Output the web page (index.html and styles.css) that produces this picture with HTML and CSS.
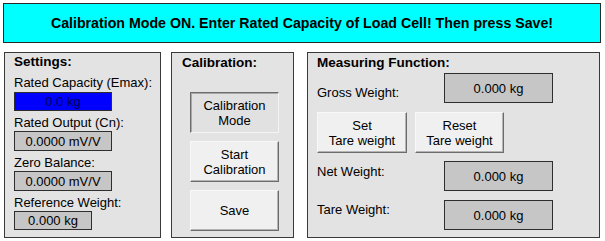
FILE: index.html
```html
<!DOCTYPE html>
<html>
<head>
<meta charset="utf-8">
<link rel="stylesheet" href="styles.css">
</head>
<body>
<div class="page">
  <div class="banner">Calibration Mode ON. Enter Rated Capacity of Load Cell! Then press Save!</div>
  <div class="panels">
    <div class="panel settings">
      <div class="title">Settings:</div>
      <div class="label first">Rated Capacity (Emax):</div>
      <div class="field editing wide">0.0 kg</div>
      <div class="label">Rated Output (Cn):</div>
      <div class="field wide">0.0000 mV/V</div>
      <div class="label">Zero Balance:</div>
      <div class="field wide">0.0000 mV/V</div>
      <div class="label">Reference Weight:</div>
      <div class="field narrow">0.000 kg</div>
    </div>
    <div class="panel calibration">
      <div class="title">Calibration:</div>
      <div class="btn-stack">
        <div class="btn pressed">Calibration<br>Mode</div>
        <div class="btn">Start<br>Calibration</div>
        <div class="btn">Save</div>
      </div>
    </div>
    <div class="panel measuring">
      <div class="title">Measuring Function:</div>
      <div class="row gross">
        <div class="rlabel">Gross Weight:</div>
        <div class="display">0.000 kg</div>
      </div>
      <div class="row buttons">
        <div class="btn tare">Set<br>Tare weight</div>
        <div class="btn tare reset">Reset<br>Tare weight</div>
      </div>
      <div class="row net">
        <div class="rlabel">Net Weight:</div>
        <div class="display">0.000 kg</div>
      </div>
      <div class="row tarew">
        <div class="rlabel">Tare Weight:</div>
        <div class="display">0.000 kg</div>
      </div>
    </div>
  </div>
</div>
</body>
</html>
```

FILE: styles.css
```css
* { box-sizing: border-box; }
html, body { margin: 0; padding: 0; background: #ffffff; }
body {
  font-family: "Liberation Sans", Arial, sans-serif;
  font-size: 13px;
  color: #000;
  width: 605px;
  height: 241px;
  overflow: hidden;
}
.page { padding: 3px 4px 0 3px; }
.banner {
  width: 598px;
  height: 40px;
  background: #00ffff;
  border: 1px solid #2a2a2a;
  font-weight: bold;
  font-size: 14.2px;
  display: flex;
  align-items: center;
  justify-content: center;
}
.panels {
  display: flex;
  margin-top: 9px;
  margin-left: 1px;
}
.panel {
  height: 186px;
  background: #e3e3e3;
  border: 1px solid #3a3a3a;
}
.settings { width: 157px; padding-left: 9px; }
.calibration { width: 123px; margin-left: 10px; padding-left: 10px; }
.measuring { width: 293px; margin-left: 13px; padding-left: 9px; }
.title {
  font-weight: bold;
  font-size: 13.5px;
  line-height: 16px;
  margin-top: 1px;
}
.measuring .title, .calibration .title { margin-top: 2px; }
.label {
  line-height: 14px;
  height: 14px;
  margin-top: 5px;
  white-space: nowrap;
}
.label.first { margin-top: 6px; }
.field {
  height: 20px;
  margin-top: 1px;
  border: 1px solid #2e2e2e;
  background: #c6c6c6;
  display: flex;
  align-items: center;
  justify-content: center;
}
.field.wide { width: 98px; }
.field.narrow { width: 78px; height: 19px; }
.field.editing { background: #0000ff; color: #000058; height: 19px; margin-top: 2px; }
.btn-stack {
  display: flex;
  flex-direction: column;
  gap: 8px;
  margin-top: 21px;
  margin-left: 8px;
}
.btn {
  width: 89px;
  height: 41px;
  background: #f0f0f0;
  border: 1px solid;
  border-color: #f8f8f8 #6c6c6c #6c6c6c #f8f8f8;
  box-shadow: inset -1px -1px 0 #b4b4b4;
  display: flex;
  align-items: center;
  justify-content: center;
  text-align: center;
  line-height: 15px;
}
.btn.pressed {
  background: #e1e1e1;
  border-color: #6c6c6c #f4f4f4 #f4f4f4 #6c6c6c;
  box-shadow: inset 1px 1px 0 #a8a8a8;
}
.row { display: flex; }
.rlabel { width: 127px; line-height: 14px; white-space: nowrap; }
.display {
  width: 109px;
  height: 30px;
  border: 1px solid #2e2e2e;
  background: #c6c6c6;
  display: flex;
  align-items: center;
  justify-content: center;
}
.gross { margin-top: 2px; }
.gross .rlabel { margin-top: 13px; }
.buttons { margin-top: 9px; gap: 8px; }
.btn.tare { width: 90px; }
.btn.reset { width: 89px; }
.net { margin-top: 8px; }
.net .rlabel { margin-top: 4px; }
.tarew { margin-top: 9px; }
.tarew .rlabel { margin-top: 3px; }
```
